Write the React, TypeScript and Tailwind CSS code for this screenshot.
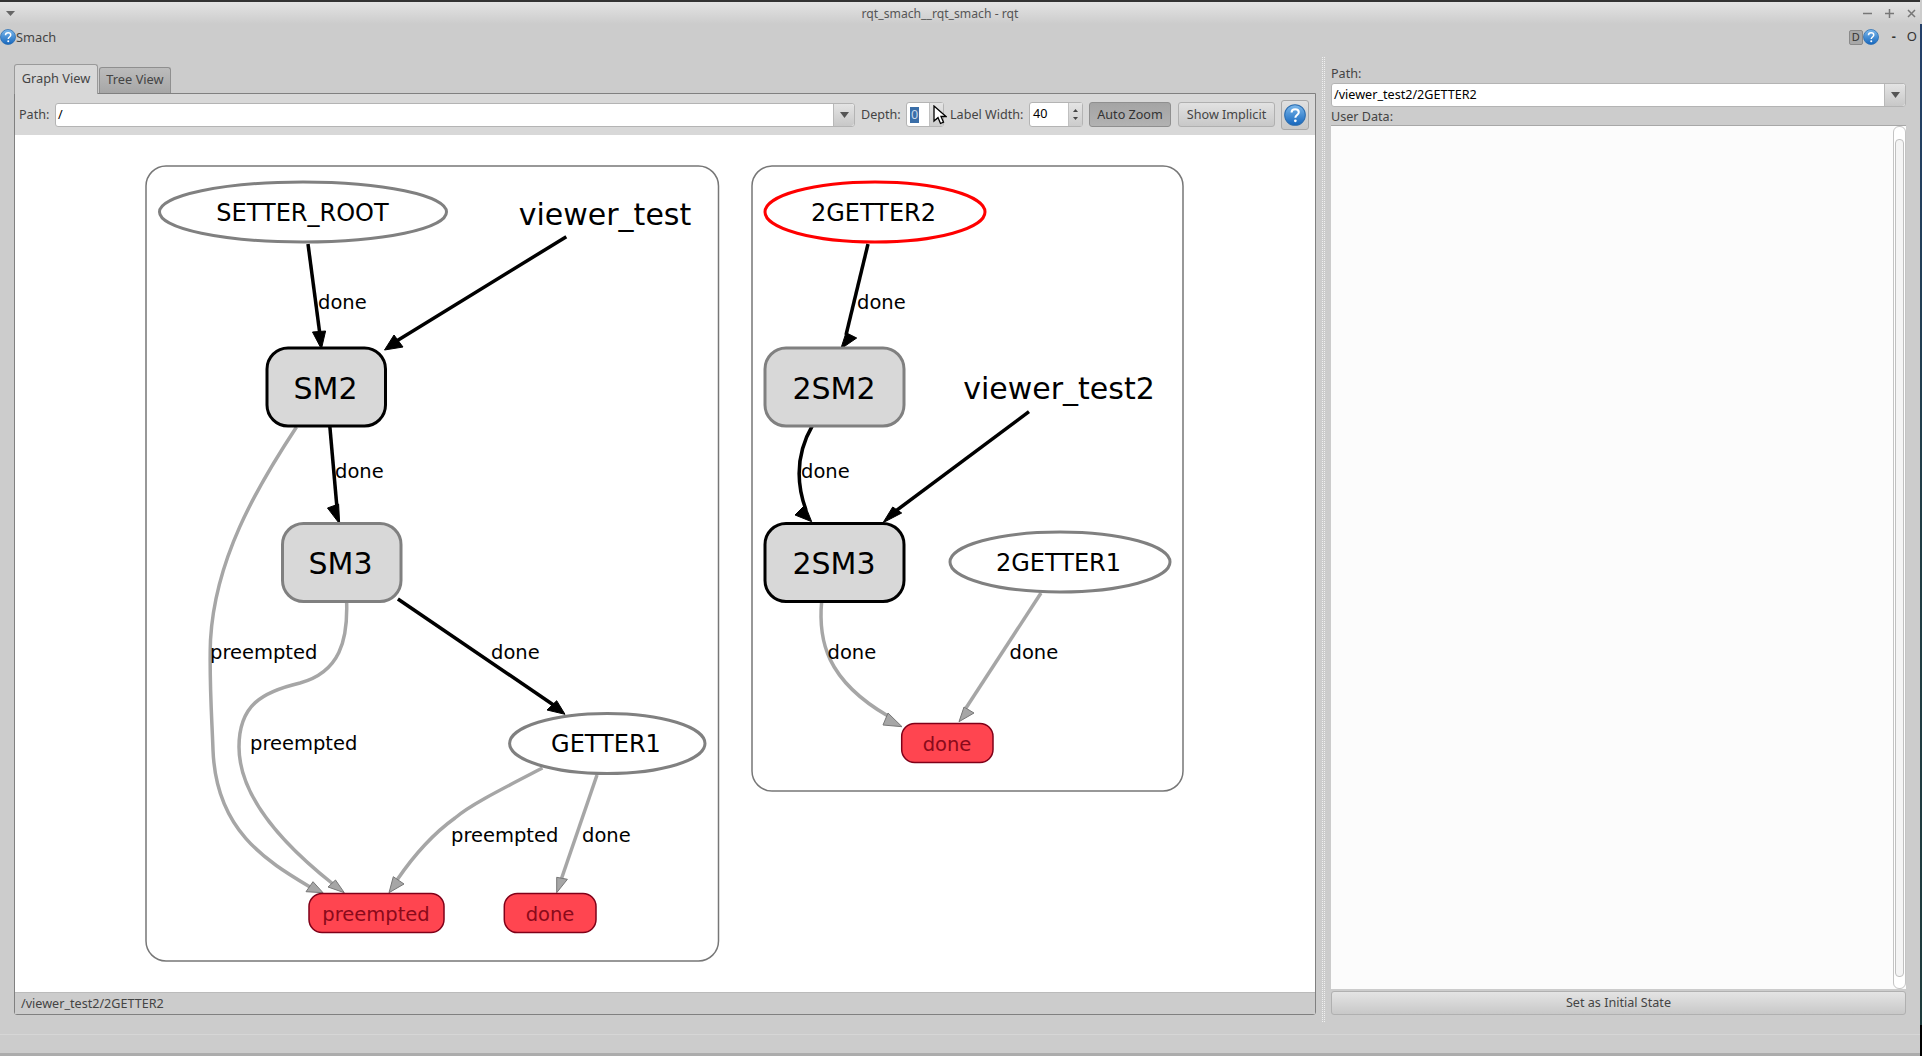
import React from 'react';

const GRAY = '#a6a6a6';

function HelpIcon({ size }: { size: number }) {
  const id = `help-${size}`;
  return (
    <svg width={size} height={size} viewBox="0 0 32 32" className="shrink-0">
      <defs>
        <linearGradient id={id} x1="0" y1="0" x2="0" y2="1">
          <stop offset="0" stopColor="#7db9ec" />
          <stop offset="1" stopColor="#1566bd" />
        </linearGradient>
      </defs>
      <circle cx="16" cy="16" r="15" fill={`url(#${id})`} stroke="#2a6cb0" strokeWidth="1.5" />
      <path d="M11 12.5c0-3 2.2-4.800 5.200-4.800s5.300 1.700 5.300 4.300c0 4-5 4-5 8" fill="none" stroke="#fff" strokeWidth="3" />
      <circle cx="16.500" cy="24.500" r="2" fill="#fff" />
    </svg>
  );
}

function DownArrow() {
  return (
    <svg width="9" height="6" viewBox="0 0 9 6">
      <path d="M0 0h9L4.500 6z" fill="#555" />
    </svg>
  );
}

function Combo({ value, width }: { value: string; width: string }) {
  return (
    <div className={`flex h-[24px] items-stretch rounded-[3px] border border-[#b4b4b4] bg-white ${width}`}>
      <div className="flex-1 pl-[2px] text-[12.6px] leading-[22px] text-black">{value}</div>
      <div className="flex w-[21px] items-center justify-center rounded-r-[3px] border-l border-[#b8b8b8] bg-gradient-to-b from-[#e4e4e4] to-[#c8c8c8]">
        <DownArrow />
      </div>
    </div>
  );
}

function Spin({ children, inputWidth }: { children: React.ReactNode; inputWidth: string }) {
  return (
    <div className="flex h-[25px] items-stretch rounded-[3px] border border-[#b4b4b4] bg-white">
      <div className={`flex items-center pl-[3px] text-[12.6px] text-black ${inputWidth}`}>{children}</div>
      <div className="flex w-[14px] flex-col items-center justify-center gap-[5px] border-l border-[#c0c0c0] bg-gradient-to-b from-[#e4e4e4] to-[#cccccc]">
        <svg width="5" height="3" viewBox="0 0 5 3"><path d="M0 3h5L2.500 0z" fill="#444" /></svg>
        <svg width="5" height="3" viewBox="0 0 5 3"><path d="M0 0h5L2.500 3z" fill="#444" /></svg>
      </div>
    </div>
  );
}

function Ellipse({ cx, cy, rx, label, x, y, stroke = '#808080' }: { cx: number; cy: number; rx: number; label: string; x: number; y: number; stroke?: string }) {
  return (
    <g>
      <ellipse cx={cx} cy={cy} rx={rx} ry={30} fill="#fff" stroke={stroke} strokeWidth="3" />
      <text x={x} y={y} fontSize="24" textAnchor="middle" fill="#000">{label}</text>
    </g>
  );
}

function Box({ x, y, w, label, tx, ty, stroke }: { x: number; y: number; w: number; label: string; tx: number; ty: number; stroke: string }) {
  return (
    <g>
      <rect x={x} y={y} width={w} height={78} rx={21} fill="#d8d8d8" stroke={stroke} strokeWidth="3" />
      <text x={tx} y={ty} fontSize="30" textAnchor="middle" fill="#000">{label}</text>
    </g>
  );
}

function Outcome({ x, w, y, label, tx, ty }: { x: number; w: number; y: number; label: string; tx: number; ty: number }) {
  return (
    <g>
      <rect x={x} y={y} width={w} height={39} rx={13} fill="#ff4550" stroke="#800018" strokeWidth="1.500" />
      <text x={tx} y={ty} fontSize="19.500" textAnchor="middle" fill="#8a0a1a">{label}</text>
    </g>
  );
}

function Edge({ d, head, gray }: { d: string; head: string; gray?: boolean }) {
  return (
    <g>
      <path d={d} fill="none" stroke={gray ? GRAY : '#000'} strokeWidth="3.500" />
      <polygon points={head} fill={gray ? GRAY : '#000'} stroke={gray ? '#777' : '#000'} strokeWidth="1" />
    </g>
  );
}

function Label({ x, y, children }: { x: number; y: number; children: string }) {
  return <text x={x} y={y} fontSize="19.500" fill="#000">{children}</text>;
}

function Graph() {
  return (
    <svg width="1300" height="857" viewBox="15 135 1300 857" className="block font-['DejaVu_Sans',sans-serif]">
      {/* viewer_test */}
      <rect x="146" y="166" width="572.500" height="795" rx="20" fill="#fff" stroke="#777" strokeWidth="1.500" />
      <Edge d="M308 244L320 335" head="312.500,332 325.600,331 321.400,349" />
      <Edge d="M566.300 236.700L395 342" head="394,335 403,347 384.500,350" />
      <Edge d="M329.800 426L337 508" head="327.500,508 338.600,504 339.700,524" />
      <Edge gray d="M296.500 427C255 490 215 560 210.500 640C209 680 212 720 213 750C216 830 265 860 310 887" head="306,891.700 313,881.700 323,892.700" />
      <Edge gray d="M346.600 601C348 640 340 672 300 683C262 692 239 705 239 747C239 800 290 850 333 884" head="328,887 335.500,880 344.300,892.700" />
      <Edge d="M397.900 599L555 706" head="547,710 556.700,700.700 565,714.300" />
      <Edge gray d="M542.500 768C500 790 470 805 455 818C430 836 412 858 397 880" head="393.300,876.700 404,884 389,892.700" />
      <Edge gray d="M597 775L561 880" head="556.700,877.300 567.400,879.300 556.700,892.700" />
      <Ellipse cx={303} cy={212} rx={143.500} label="SETTER_ROOT" x={302.500} y={220.500} />
      <text x="605" y="224.500" fontSize="30" textAnchor="middle" fill="#000">viewer_test</text>
      <Box x={267} y={348} w={118.500} label="SM2" tx={325.500} ty={398.500} stroke="#000" />
      <Box x={282.500} y={523.500} w={118.500} label="SM3" tx={340.500} ty={574} stroke="#808080" />
      <Ellipse cx={607.300} cy={743.500} rx={97.700} label="GETTER1" x={606} y={752} />
      <Outcome x={309} w={135} y={893.500} label="preempted" tx={376} ty={920.500} />
      <Outcome x={504.300} w={91.700} y={893.500} label="done" tx={550} ty={920.500} />
      <Label x={318} y={308.500}>done</Label>
      <Label x={335} y={477.500}>done</Label>
      <Label x={210} y={658.500}>preempted</Label>
      <Label x={250} y={749.500}>preempted</Label>
      <Label x={491} y={658.500}>done</Label>
      <Label x={451} y={841.500}>preempted</Label>
      <Label x={582} y={841.500}>done</Label>

      {/* viewer_test2 */}
      <rect x="752" y="166" width="431" height="625" rx="20" fill="#fff" stroke="#777" strokeWidth="1.500" />
      <Edge d="M868 244L846 335" head="846,332.700 856.700,338 840.700,349" />
      <Edge d="M1029 411.700L893 513" head="892.700,507 901.700,513 883,522.700" />
      <Edge d="M812.700 425C797 452 795 480 806 510" head="795,515 805,505 811.700,521.700" />
      <Edge gray d="M821.700 601C818 640 826 680 888 716" head="883,725 888,713 902,726.700" />
      <Edge gray d="M1041 593L966 708" head="964,707 974,713 959,721.700" />
      <Ellipse cx={875} cy={212} rx={110} label="2GETTER2" x={873.500} y={220.500} stroke="#ff0000" />
      <Box x={765} y={348} w={139} label="2SM2" tx={834} ty={398.500} stroke="#808080" />
      <text x="1059" y="398.500" fontSize="30" textAnchor="middle" fill="#000">viewer_test2</text>
      <Box x={765} y={523.500} w={139} label="2SM3" tx={834} ty={574} stroke="#000" />
      <Ellipse cx={1060} cy={562} rx={110} label="2GETTER1" x={1058.500} y={570.500} />
      <Outcome x={901.700} w={91.300} y={723.500} label="done" tx={947} ty={750.500} />
      <Label x={857} y={308.500}>done</Label>
      <Label x={801} y={477.500}>done</Label>
      <Label x={827.500} y={658.500}>done</Label>
      <Label x={1009.500} y={658.500}>done</Label>
    </svg>
  );
}

export default function App() {
  return (
    <div className="flex h-[1056px] w-[1922px] overflow-hidden bg-[#cccccc] font-['Noto_Sans',sans-serif] text-[12.6px] text-[#444]">
      <div className="flex h-full w-[1920px] shrink-0 flex-col">
        {/* title bar */}
        <div className="flex h-[24px] shrink-0 items-center border-t-2 border-[#333] bg-gradient-to-b from-[#e4e4e4] to-[#cccccc] pl-[6px] pr-[4px]">
          <svg width="9" height="5" viewBox="0 0 9 5"><path d="M0 0h9L4.500 5z" fill="#666" /></svg>
          <div className="flex-1 pl-[2px] pt-[3px] text-center text-[12.2px] text-[#555]">rqt_smach__rqt_smach - rqt</div>
          <div className="flex items-center gap-[13px] text-[#777]">
            <svg width="9" height="9" viewBox="0 0 9 9"><path d="M0 4.500h9" stroke="currentColor" strokeWidth="1.500" /></svg>
            <svg width="9" height="9" viewBox="0 0 9 9"><path d="M0 4.500h9M4.500 0v9" stroke="currentColor" strokeWidth="1.500" /></svg>
            <svg width="9" height="9" viewBox="0 0 9 9"><path d="M1 1l7 7M8 1l-7 7" stroke="currentColor" strokeWidth="1.500" /></svg>
          </div>
        </div>

        {/* plugin menu row */}
        <div className="flex h-[26px] shrink-0 items-center pr-[3px]">
          <HelpIcon size={16} />
          <span className="pt-[1px] text-[12.8px] text-[#444]">Smach</span>
          <div className="ml-auto flex items-center">
            <div className="flex h-[15px] w-[14px] items-center justify-center rounded-[2px] border border-[#8a8a8a] bg-[#a8a8a8] text-[11px] text-[#333]">D</div>
            <HelpIcon size={16} />
            <span className="ml-[13px] font-bold text-[#333]">-</span>
            <span className="ml-[11px] text-[13px] text-[#333]">O</span>
          </div>
        </div>

        <div className="flex h-[972px] shrink-0 items-start">
          {/* left pane */}
          <div className="ml-[14px] mt-[14px] w-[1302px] shrink-0">
            <div className="flex h-[30px] items-start">
              <div className="relative z-10 h-[30px] w-[84px] rounded-t-[3px] border border-b-0 border-[#9a9a9a] bg-[#d8d8d8] pt-[4px] text-center text-[12.8px] text-[#444]">Graph View</div>
              <div className="ml-px mt-[3px] h-[26px] w-[72px] rounded-t-[3px] border border-b-0 border-[#8f8f8f] bg-gradient-to-b from-[#bcbcbc] to-[#a6a6a6] pt-[2px] text-center text-[12.8px] text-[#444]">Tree View</div>
            </div>
            <div className="-mt-px rounded-b-[3px] border border-[#808080]">
              <div className="flex h-[41px] items-center bg-[#d8d8d8] pl-[4px]">
                <span className="w-[36px] shrink-0 pt-[1px]">Path:</span>
                <Combo value="/" width="w-[800px] shrink-0" />
                <span className="ml-[6px] w-[45px] shrink-0 pt-[1px]">Depth:</span>
                <div className="relative">
                  <Spin inputWidth="w-[22px]">
                    <span className="bg-[#3a6ea8] px-[1px] leading-[16px] text-[#c8d8ea]">0</span>
                  </Spin>
                  <svg width="14" height="20" viewBox="0 0 14 20" className="absolute left-[27px] top-[3px]">
                    <path d="M1 1v15l4-3.500 2.500 6 3-1.300-2.500-5.700h5z" fill="#fff" stroke="#000" strokeWidth="1.300" />
                  </svg>
                </div>
                <span className="ml-[6px] w-[79px] shrink-0 pt-[1px]">Label Width:</span>
                <Spin inputWidth="w-[38px]">40</Spin>
                <div className="ml-[6px] flex h-[25px] w-[82px] shrink-0 items-center justify-center rounded-[3px] border border-[#8f8f8f] bg-gradient-to-b from-[#a4a4a4] to-[#b2b2b2] pt-[1px] text-[#333]">Auto Zoom</div>
                <div className="ml-[7px] flex h-[25px] w-[97px] shrink-0 items-center justify-center rounded-[3px] border border-[#b0b0b0] bg-gradient-to-b from-[#e2e2e2] to-[#c8c8c8] pt-[1px]">Show Implicit</div>
                <div className="ml-[6px] flex h-[30px] w-[28px] shrink-0 items-center justify-center rounded-[3px] border border-[#a8a8a8] bg-gradient-to-b from-[#e0e0e0] to-[#c8c8c8]">
                  <HelpIcon size={22} />
                </div>
              </div>
              <div className="h-[857px] bg-white">
                <Graph />
              </div>
              <div className="h-[22px] border-t border-[#bbbbbb] bg-[#cccccc] pl-[6px] leading-[21px]">/viewer_test2/2GETTER2</div>
            </div>
          </div>

          {/* splitter */}
          <div className="ml-[6px] mt-[7px] h-[965px] w-[3px] shrink-0 border-x border-dotted border-[#f0f0f0]" />

          {/* right pane */}
          <div className="ml-[6px] mt-[15px] flex w-[575px] shrink-0 flex-col">
            <div className="h-[18px] leading-[17px]">Path:</div>
            <Combo value="/viewer_test2/2GETTER2" width="w-full" />
            <div className="h-[18px] pt-[1px] leading-[18px]">User Data:</div>
            <div className="flex h-[864px] justify-end border-t border-[#a8a8a8] bg-[#fcfcfc]">
              <div className="flex w-[13px] flex-col items-center rounded-[6px] border border-[#c4c4c4] bg-white py-[6px]">
                <div className="mt-[6px] h-[838px] w-[9px] rounded-[4px] border border-[#c0c0c0] bg-[#f4f4f4]" />
              </div>
            </div>
            <div className="mt-[2px] flex h-[24px] items-center justify-center rounded-[3px] border border-[#b0b0b0] bg-gradient-to-b from-[#e4e4e4] to-[#c8c8c8] pt-[1px]">Set as Initial State</div>
          </div>
        </div>

        {/* status bar */}
        <div className="mt-[12px] flex-1 border-t border-[#d6d6d6]" />
        <div className="h-[3px] shrink-0 bg-[#acacac]" />
      </div>

      {/* desktop showing past the window edge */}
      <div className="mt-[24px] flex w-[2px] shrink-0 flex-col">
        <div className="flex-1 bg-gradient-to-b from-[#24406a] via-[#1f3c44] to-[#1d3a3c]" />
        <div className="h-[31px] bg-black" />
      </div>
    </div>
  );
}
